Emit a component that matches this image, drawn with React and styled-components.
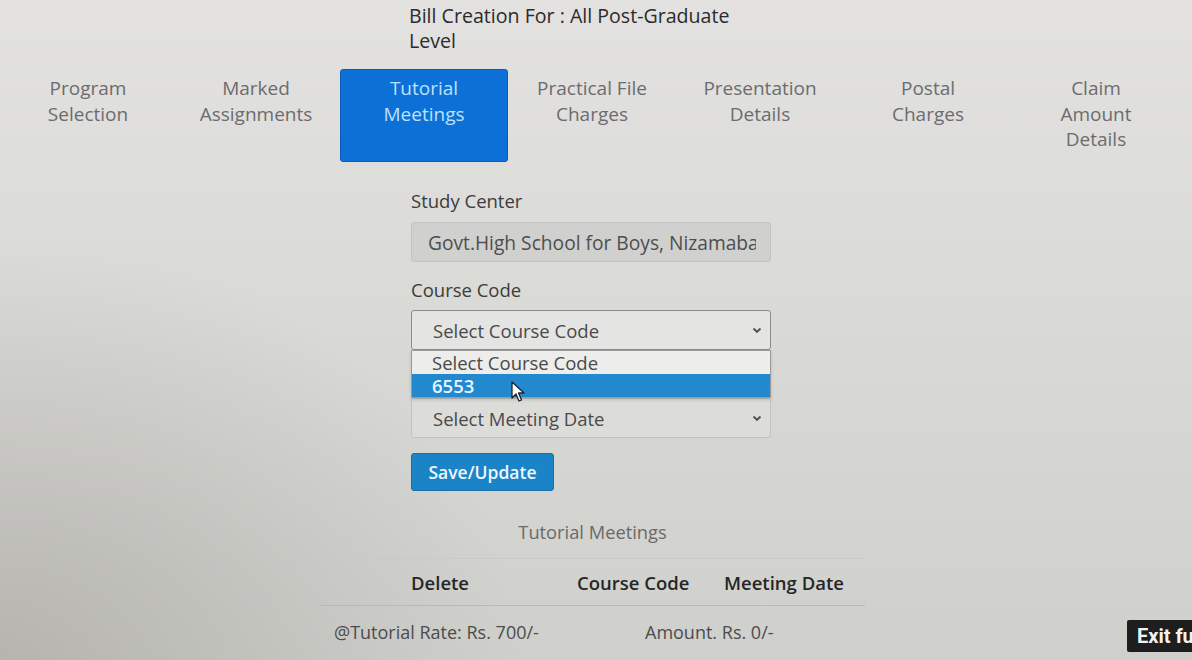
import React from "react";
import styled, { createGlobalStyle } from "styled-components";

const Global = createGlobalStyle`
  html, body { margin: 0; padding: 0; }
  body {
    width: 1192px;
    height: 660px;
    overflow: hidden;
    font-family: "Open Sans", "Liberation Sans", sans-serif;
    background: #d6d6d3;
  }
`;

const Page = styled.div`
  position: relative;
  width: 1192px;
  height: 660px;
  overflow: hidden;
  display: flex;
  flex-direction: column;
  background:
    radial-gradient(ellipse 520px 420px at 0% 100%, rgba(150,146,140,0.45), rgba(150,146,140,0) 100%),
    linear-gradient(180deg, #e3e2e0 0%, #dadad7 45%, #cfd0cc 100%);
`;

const Title = styled.div`
  margin: 3px 0 0 409px;
  width: 345px;
  font-size: 19.6px;
  line-height: 25px;
  font-weight: 500;
  color: #2b2b2b;
`;

const TabRow = styled.div`
  display: grid;
  grid-template-columns: repeat(7, 168px);
  padding-left: 4px;
  margin-top: 16px;
`;

const Tab = styled.div`
  height: 93px;
  box-sizing: border-box;
  padding: 6px 8px 0;
  text-align: center;
  font-size: 19px;
  line-height: 25.5px;
  color: ${(p) => (p.$active ? "#bfe0ff" : "#6c6c6e")};
  background: ${(p) => (p.$active ? "#0c70d6" : "transparent")};
  border: ${(p) => (p.$active ? "1px solid #0a5db6" : "1px solid transparent")};
  border-radius: 3px;
  font-weight: ${(p) => (p.$active ? 500 : 400)};
  white-space: nowrap;
`;

const Form = styled.div`
  margin: 27px 0 0 411px;
  width: 360px;
  display: flex;
  flex-direction: column;
`;

const Label = styled.div`
  font-size: 18.5px;
  line-height: 24px;
  color: #3c3c3c;
  font-weight: 400;
  margin-top: ${(p) => p.$top || 0}px;
`;

const ReadOnly = styled.div`
  margin-top: 9px;
  height: 40px;
  box-sizing: border-box;
  border: 1px solid #c3c3c1;
  border-radius: 3px;
  background: #d0d0ce;
  padding: 0 14px 0 16px;
  display: flex;
  align-items: center;
  font-size: 19.2px;
  color: #4e4e4e;
`;

const Value = styled.span`
  flex: 1;
  min-width: 0;
  white-space: nowrap;
  overflow: hidden;
`;

const SelectWrap = styled.div`
  position: relative;
  margin-top: ${(p) => p.$top || 8}px;
`;

const SelectBox = styled.div`
  height: 40px;
  box-sizing: border-box;
  border: 1px solid ${(p) => (p.$focus ? "#8c8c8c" : "#c2c2c0")};
  border-radius: 3px;
  background: ${(p) => (p.$focus ? "#e4e4e2" : "#dcdcd9")};
  padding: 0 8px 0 21px;
  display: flex;
  align-items: center;
  justify-content: space-between;
  font-size: 18.5px;
  color: #4a4a4a;
`;

const Chevron = () => (
  <svg width="10" height="7" viewBox="0 0 10 7">
    <path d="M1.5 1.5 L5 4.8 L8.5 1.5" fill="none" stroke="#555" strokeWidth="2" />
  </svg>
);

const DropList = styled.div`
  position: absolute;
  left: 0;
  right: 0;
  top: 40px;
  z-index: 5;
  border: 1px solid #9a9a9a;
  background: #ededeb;
  box-shadow: 0 2px 3px rgba(0,0,0,0.15);
`;

const Option = styled.div`
  height: 23px;
  box-sizing: border-box;
  padding-left: 20px;
  display: flex;
  align-items: center;
  font-size: 18.5px;
  color: ${(p) => (p.$sel ? "#e8f4ff" : "#4a4a4a")};
  background: ${(p) => (p.$sel ? "#2389cf" : "transparent")};
  font-weight: ${(p) => (p.$sel ? 600 : 400)};
`;

const Cursor = styled.svg`
  position: absolute;
  left: 99px;
  top: 30px;
  z-index: 6;
`;

const Button = styled.button`
  margin-top: 15px;
  width: 143px;
  height: 38px;
  border: 1px solid #156fa8;
  border-radius: 3px;
  background: #1b84c6;
  color: #eef7ff;
  font-family: inherit;
  font-size: 17.5px;
  font-weight: 600;
  padding: 0;
`;

const TableArea = styled.div`
  margin: 29px 0 0 320px;
  width: 545px;
  display: flex;
  flex-direction: column;
`;

const Caption = styled.div`
  text-align: center;
  font-size: 18.3px;
  line-height: 24px;
  color: #6a6a6a;
`;

const HeadRow = styled.div`
  margin-top: 14px;
  height: 48px;
  box-sizing: border-box;
  border-top: 1px solid #c9c9c6;
  border-bottom: 1px solid #b9b9b6;
  display: grid;
  grid-template-columns: 166px 147px 1fr;
  padding-left: 91px;
  align-items: center;
  font-size: 18.5px;
  font-weight: 600;
  color: #262626;
  white-space: nowrap;
`;

const FootRow = styled.div`
  display: grid;
  grid-template-columns: 311px 1fr;
  padding-left: 14px;
  height: 52px;
  align-items: center;
  font-size: 18px;
  color: #4c4c4c;
  white-space: nowrap;
`;

const ExitBadge = styled.div`
  position: absolute;
  left: 1127px;
  top: 620px;
  height: 32px;
  padding: 0 10px;
  display: flex;
  align-items: center;
  background: #1e1e1e;
  color: #f2f2f2;
  font-family: "Roboto", "Liberation Sans", sans-serif;
  font-size: 20px;
  font-weight: 700;
  white-space: nowrap;
  border-radius: 2px;
`;

const tabs = [
  ["Program", "Selection"],
  ["Marked", "Assignments"],
  ["Tutorial", "Meetings"],
  ["Practical File", "Charges"],
  ["Presentation", "Details"],
  ["Postal", "Charges"],
  ["Claim", "Amount", "Details"],
];

export default function App() {
  return (
    <>
      <Global />
      <Page>
        <Title>Bill Creation For : All Post-Graduate Level</Title>
        <TabRow>
          {tabs.map((t, i) => (
            <Tab key={i} $active={i === 2}>
              {t.map((line, j) => (
                <div key={j}>{line}</div>
              ))}
            </Tab>
          ))}
        </TabRow>
        <Form>
          <Label>Study Center</Label>
          <ReadOnly>
            <Value>Govt.High School for Boys, Nizamabad</Value>
          </ReadOnly>
          <Label $top={16}>Course Code</Label>
          <SelectWrap>
            <SelectBox $focus>
              <span>Select Course Code</span>
              <Chevron />
            </SelectBox>
            <DropList>
              <Option>Select Course Code</Option>
              <Option $sel>6553</Option>
              <Cursor width="16" height="22" viewBox="0 0 16 22">
                <path d="M1 1 L1 17 L5 13 L8 20 L10.5 19 L7.5 12 L13 12 Z" fill="#fff" stroke="#222" strokeWidth="1.3" strokeLinejoin="round" />
              </Cursor>
            </DropList>
          </SelectWrap>
          <SelectWrap $top={48}>
            <SelectBox>
              <span>Select Meeting Date</span>
              <Chevron />
            </SelectBox>
          </SelectWrap>
          <div>
            <Button>Save/Update</Button>
          </div>
        </Form>
        <TableArea>
          <Caption>Tutorial Meetings</Caption>
          <HeadRow>
            <span>Delete</span>
            <span>Course Code</span>
            <span>Meeting Date</span>
          </HeadRow>
          <FootRow>
            <span>@Tutorial Rate: Rs. 700/-</span>
            <span>Amount. Rs. 0/-</span>
          </FootRow>
        </TableArea>
        <ExitBadge>Exit full screen</ExitBadge>
      </Page>
    </>
  );
}
